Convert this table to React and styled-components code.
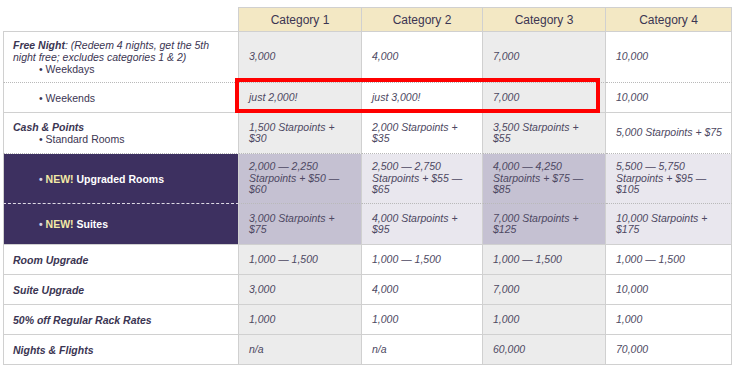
import React from 'react';
import styled, { createGlobalStyle, css } from 'styled-components';

const GlobalStyle = createGlobalStyle`
  body {
    margin: 0;
    background: #ffffff;
    font-family: "Liberation Sans", Arial, sans-serif;
  }
`;

const Wrap = styled.div`
  padding: 7px 0 0 3px;
`;

const Grid = styled.div`
  position: relative;
  display: grid;
  grid-template-columns: 236px 123px 121px 123px 126px;
  grid-template-rows: ${(p) => p.$rows};
  width: 729px;
`;

const lineStyle = (d, purple) => {
  if (d === 'dotted') return '1px dotted #b9b9b9';
  if (d === 'dashed') return purple ? '1px dashed #dedbe6' : '1px dashed #b9b9b9';
  return '1px solid #d0d0d0';
};

const Corner = styled.div`
  box-sizing: border-box;
  border-right: 1px solid #d0d0d0;
  border-bottom: 1px solid #d0d0d0;
`;

const HeadCell = styled.div`
  box-sizing: border-box;
  display: flex;
  align-items: center;
  justify-content: center;
  background: #f3e8c4;
  border-top: 1px solid #d0d0d0;
  border-right: 1px solid #d0d0d0;
  border-bottom: 1px solid #d0d0d0;
  color: #3b3552;
  font-size: 12px;
`;

const LabelCell = styled.div`
  box-sizing: border-box;
  display: flex;
  flex-direction: column;
  justify-content: center;
  padding: 0 10px 0 9px;
  border-left: 1px solid #d0d0d0;
  border-right: 1px solid #d0d0d0;
  border-bottom: ${(p) => lineStyle(p.$divider, p.$purple)};
  background: ${(p) => (p.$purple ? '#3d3060' : '#ffffff')};
  color: #3b3552;
  font-size: 10.5px;
  line-height: 12px;
  white-space: nowrap;
`;

const DataCell = styled.div`
  box-sizing: border-box;
  display: flex;
  flex-direction: column;
  justify-content: center;
  padding: 0 6px 0 10px;
  border-right: 1px solid #d0d0d0;
  border-bottom: ${(p) => lineStyle(p.$divider)};
  color: #4d4862;
  font-size: 10.5px;
  line-height: 11.5px;
  font-style: italic;
  white-space: nowrap;
  ${(p) =>
    p.$purple
      ? css`
          background: ${p.$gray ? '#c5c1d2' : '#e9e7ee'};
        `
      : css`
          background: ${p.$gray ? '#ececec' : '#ffffff'};
        `}
`;

const Title = styled.span`
  font-weight: bold;
  font-style: italic;
`;

const Note = styled.div`
  font-style: italic;
`;

const Sub = styled.div`
  padding-left: 26px;
`;

const NewSub = styled.div`
  padding-left: 26px;
  font-weight: bold;
  color: #ffffff;
`;

const Dot = styled.span`
  color: ${(p) => (p.$light ? '#d8d4e2' : 'inherit')};
`;

const NewTag = styled.span`
  color: #f3e9a6;
`;

const Highlight = styled.div`
  position: absolute;
  left: 232px;
  top: 71px;
  width: 365px;
  height: 35px;
  box-sizing: border-box;
  border: 4px solid #ff0000;
  pointer-events: none;
`;

const heads = ['Category 1', 'Category 2', 'Category 3', 'Category 4'];

const rows = [
  {
    h: 51,
    divider: 'dotted',
    label: (
      <>
        <Note>
          <Title>Free Night</Title>: (Redeem 4 nights, get the 5th
        </Note>
        <Note>night free; excludes categories 1 &amp; 2)</Note>
        <Sub>• Weekdays</Sub>
      </>
    ),
    values: ['3,000', '4,000', '7,000', '10,000'],
  },
  {
    h: 30,
    divider: 'solid',
    label: <Sub>• Weekends</Sub>,
    values: ['just 2,000!', 'just 3,000!', '7,000', '10,000'],
  },
  {
    h: 41,
    divider: 'dotted',
    label: (
      <>
        <div>
          <Title>Cash &amp; Points</Title>
        </div>
        <Sub>• Standard Rooms</Sub>
      </>
    ),
    values: [
      ['1,500 Starpoints +', '$30'],
      ['2,000 Starpoints +', '$35'],
      ['3,500 Starpoints +', '$55'],
      ['5,000 Starpoints + $75'],
    ],
  },
  {
    h: 50,
    purple: true,
    divider: 'dotted',
    labelDivider: 'dashed',
    label: (
      <NewSub>
        <Dot $light>•</Dot> <NewTag>NEW!</NewTag> Upgraded Rooms
      </NewSub>
    ),
    values: [
      ['2,000 — 2,250', 'Starpoints + $50 —', '$60'],
      ['2,500 — 2,750', 'Starpoints + $55 —', '$65'],
      ['4,000 — 4,250', 'Starpoints + $75 —', '$85'],
      ['5,500 — 5,750', 'Starpoints + $95 —', '$105'],
    ],
  },
  {
    h: 41,
    purple: true,
    divider: 'solid',
    label: (
      <NewSub>
        <Dot $light>•</Dot> <NewTag>NEW!</NewTag> Suites
      </NewSub>
    ),
    values: [
      ['3,000 Starpoints +', '$75'],
      ['4,000 Starpoints +', '$95'],
      ['7,000 Starpoints +', '$125'],
      ['10,000 Starpoints +', '$175'],
    ],
  },
  {
    h: 30,
    divider: 'solid',
    label: <Title>Room Upgrade</Title>,
    values: ['1,000 — 1,500', '1,000 — 1,500', '1,000 — 1,500', '1,000 — 1,500'],
  },
  {
    h: 30,
    divider: 'solid',
    label: <Title>Suite Upgrade</Title>,
    values: ['3,000', '4,000', '7,000', '10,000'],
  },
  {
    h: 30,
    divider: 'solid',
    label: <Title>50% off Regular Rack Rates</Title>,
    values: ['1,000', '1,000', '1,000', '1,000'],
  },
  {
    h: 30,
    divider: 'solid',
    label: <Title>Nights &amp; Flights</Title>,
    values: ['n/a', 'n/a', '60,000', '70,000'],
  },
];

const template = ['25px', ...rows.map((r) => `${r.h}px`)].join(' ');

export default function App() {
  return (
    <>
      <GlobalStyle />
      <Wrap>
        <Grid $rows={template}>
          <Corner />
          {heads.map((h) => (
            <HeadCell key={h}>{h}</HeadCell>
          ))}

          {rows.map((row, i) => (
            <React.Fragment key={i}>
              <LabelCell $purple={row.purple} $divider={row.labelDivider || row.divider}>
                {row.label}
              </LabelCell>
              {row.values.map((v, j) => (
                <DataCell
                  key={j}
                  $gray={j % 2 === 0}
                  $purple={row.purple}
                  $divider={row.divider}
                >
                  {(Array.isArray(v) ? v : [v]).map((line, k) => (
                    <div key={k}>{line}</div>
                  ))}
                </DataCell>
              ))}
            </React.Fragment>
          ))}

          <Highlight />
        </Grid>
      </Wrap>
    </>
  );
}
